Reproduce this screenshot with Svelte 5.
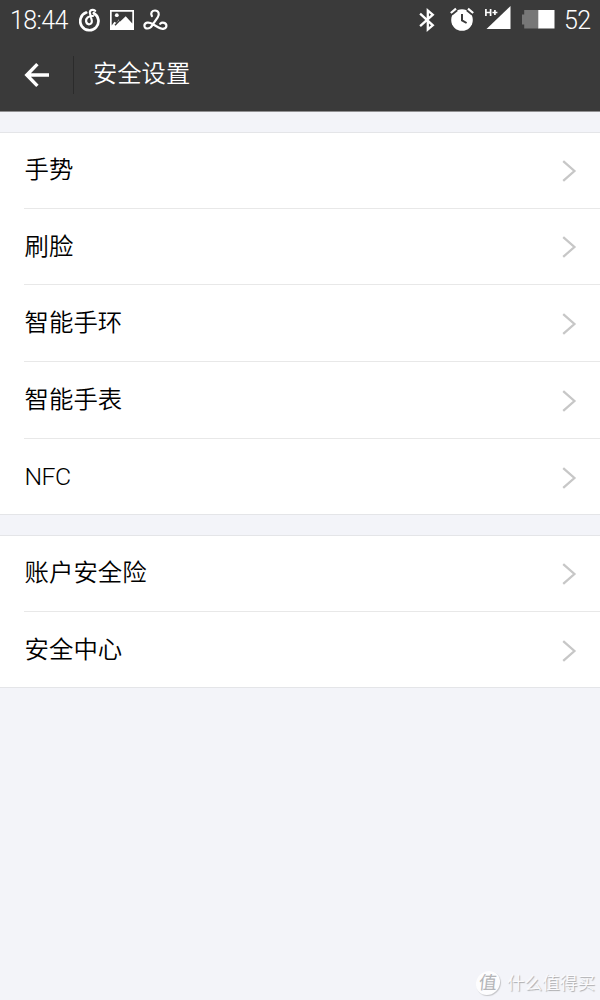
<script>
  const groups = [
    ['手势', '刷脸', '智能手环', '智能手表', 'NFC'],
    ['账户安全险', '安全中心'],
  ];
</script>

<div class="screen">
  <header>
    <div class="status">
      <span class="time">18:44</span>
      <svg class="music" width="22" height="24" viewBox="0 0 22 24" fill="none" stroke="#fff" stroke-width="2.7" stroke-linecap="round">
        <path d="M7.2 4.6A9.1 9.1 0 1 0 14.8 5.2" />
        <path d="M16.2 2.8C13.8 .9 10.6 1.8 10.9 4.9L12.8 12.6C13.5 17 8 17.6 7.1 13.6C6.6 10.2 9.6 7.8 14 8" stroke-width="2.2" />
      </svg>
      <svg class="photo" width="24" height="20" viewBox="0 0 24 20">
        <path fill="#fff" fill-rule="evenodd" d="M0 0H24V20H0ZM1.7 1.7V15.4L4.4 11.7L6.4 13L8.8 9.6L10.2 11.4L15.7 6.2L22.3 13.5V1.7Z" />
        <circle cx="6.8" cy="5.2" r="1.9" fill="#fff" />
        <path d="M5 15.2L10 9.9" stroke="#3a3a3a" stroke-width="1.5" />
      </svg>
      <svg class="knot" width="25" height="22" viewBox="0 0 25 22" fill="none" stroke="#fff" stroke-width="2.2" stroke-linecap="round">
        <path d="M8.9 7C7.2 3.8 9 1.5 12 1.5C15.8 1.5 16.8 5.2 14.7 8.5L9.3 16.2C6.8 20.7 1.4 20.3 1.4 16.8C1.4 13.2 6 12.7 9.5 15L15.5 18.5C19.4 20.9 23.4 19.8 23.4 16.8C23.4 13.8 19.3 12.8 17.2 14.8" />
      </svg>
      <span class="spring"></span>
      <svg class="bluetooth" width="16" height="24" viewBox="0 0 16 24" fill="none" stroke="#fff" stroke-width="2.3">
        <path d="M1.1 5.7L13.8 17.3L8.8 21.5V2.5L13.8 6.7L1.1 18.2" />
      </svg>
      <svg class="alarm" width="24" height="24" viewBox="0 0 24 24">
        <circle cx="12" cy="13" r="10.8" fill="#fff" />
        <path d="M1 6.4L6.2 2M23 6.4L17.8 2" stroke="#3a3a3a" stroke-width="5" fill="none" />
        <path d="M.8 6L6 1.6M23.2 6L18 1.6" stroke="#fff" stroke-width="2.2" fill="none" />
        <path d="M12 7V13.4L16.6 16" stroke="#3a3a3a" stroke-width="2" fill="none" />
      </svg>
      <svg class="signal" width="26" height="24" viewBox="0 0 26 24">
        <path d="M25.5 0V23H1.5Z" fill="#fff" />
        <path d="M.9 3V10M5.6 3V10M.9 6.5H5.6M7.4 6.5H12.4M9.9 4V9" stroke="#fff" stroke-width="1.7" fill="none" />
      </svg>
      <svg class="battery" width="33" height="19" viewBox="0 0 33 19">
        <path d="M2.2 0H17V18.5H2.2V14.5H0V4.5H2.2Z" fill="#777" />
        <path d="M16.3 0H32.5V18.5H16.3Z" fill="#fff" />
      </svg>
      <span class="charge">52</span>
    </div>
    <div class="bar">
      <svg class="back" width="26" height="26" viewBox="0 0 26 26" fill="none" stroke="#fff" stroke-width="3.4">
        <path d="M13.4 2.1L2.8 13L13.4 23.9M3 13H25" />
      </svg>
      <span class="divider"></span>
      <h1>安全设置</h1>
    </div>
  </header>

  {#each groups as items}
    <section>
      {#each items as label}
        <div class="row">
          <span class:latin={label === 'NFC'}>{label}</span>
          <svg width="15" height="22" viewBox="0 0 15 22" fill="none" stroke="#c7c7c7" stroke-width="2.3">
            <path d="M1.2 1.2L12.4 11L1.2 20.8" />
          </svg>
        </div>
      {/each}
    </section>
  {/each}

  <footer>
    <span class="badge">值</span>
    <span class="brand">什么值得买</span>
  </footer>
</div>

<style>
  :global(body) { margin: 0; background: #f3f4f9; }
  .screen {
    width: 600px;
    height: 1000px;
    box-sizing: border-box;
    display: flex;
    flex-direction: column;
    overflow: hidden;
    background: #f3f4f9;
    color: #000;
    font-family: Roboto, "Noto Sans CJK SC", sans-serif;
  }
  svg { display: block; flex: none; }
  header {
    height: 112px;
    box-sizing: border-box;
    flex: none;
    background: #3a3a3a;
    border-bottom: 1px solid #909092;
    color: #fff;
  }
  .status {
    height: 40px;
    display: flex;
    align-items: flex-start;
    padding: 0 9px 0 10px;
    font-size: 25px;
    font-weight: 300;
    line-height: 41px;
  }
  .time { width: 69px; letter-spacing: -0.6px; }
  .music { margin-top: 8px; }
  .photo { margin: 10px 0 0 9px; }
  .knot { margin: 9px 0 0 9px; }
  .spring { flex: 1; }
  .bluetooth { margin: 8px 15px 0 0; }
  .alarm { margin: 7px 11px 0 0; }
  .signal { margin: 6px 11px 0 0; }
  .battery { margin: 10px 9px 0 0; }
  .charge { width: 27px; letter-spacing: -0.7px; }
  .bar { height: 71px; display: flex; align-items: center; }
  .back { margin: 0 0 1px 24px; }
  .divider { width: 1px; height: 38px; margin: 0 19px 1px 23px; background: #2b2b2b; }
  h1 { margin: 0 0 3px; font-size: 24.3px; font-weight: 350; line-height: 36px; }
  section {
    margin: 20px 0 0;
    background: #fff;
    border-top: 1px solid #e4e5e8;
    border-bottom: 1px solid #e4e5e8;
  }
  .row {
    height: 77px;
    box-sizing: border-box;
    margin-left: 24px;
    padding: 1px 23px 0 0;
    display: flex;
    align-items: center;
    justify-content: space-between;
    border-bottom: 1px solid #e8e8e8;
    font-size: 24.4px;
    font-weight: 350;
  }
  .row:nth-child(-n + 2) { height: 76px; }
  .row:first-child { padding-top: 0; }
  .row:last-child { height: 75px; padding-top: 2px; border-bottom: 0; }
  section + section .row { height: 76px; padding-top: 1px; }
  .row span { line-height: 36px; margin: 0 0 1px 0.6px; }
  .row span.latin { font-size: 24.8px; letter-spacing: -0.6px; }
  footer {
    margin-top: auto;
    padding: 0 5px 4px 0;
    display: flex;
    justify-content: flex-end;
    align-items: center;
    gap: 7px;
    color: #fbfbfd;
    text-shadow: 1px 1px 1px #aaabad;
  }
  .badge {
    width: 24px;
    height: 24px;
    border-radius: 50%;
    background: #fdfdfe;
    box-shadow: 1px 1px 1px #c4c5c8;
    color: #b4b5b8;
    text-shadow: none;
    font-size: 18px;
    line-height: 24px;
    text-align: center;
    transform: skewX(-6deg);
  }
  .brand { font-size: 17.6px; line-height: 26px; font-weight: 350; }
</style>
